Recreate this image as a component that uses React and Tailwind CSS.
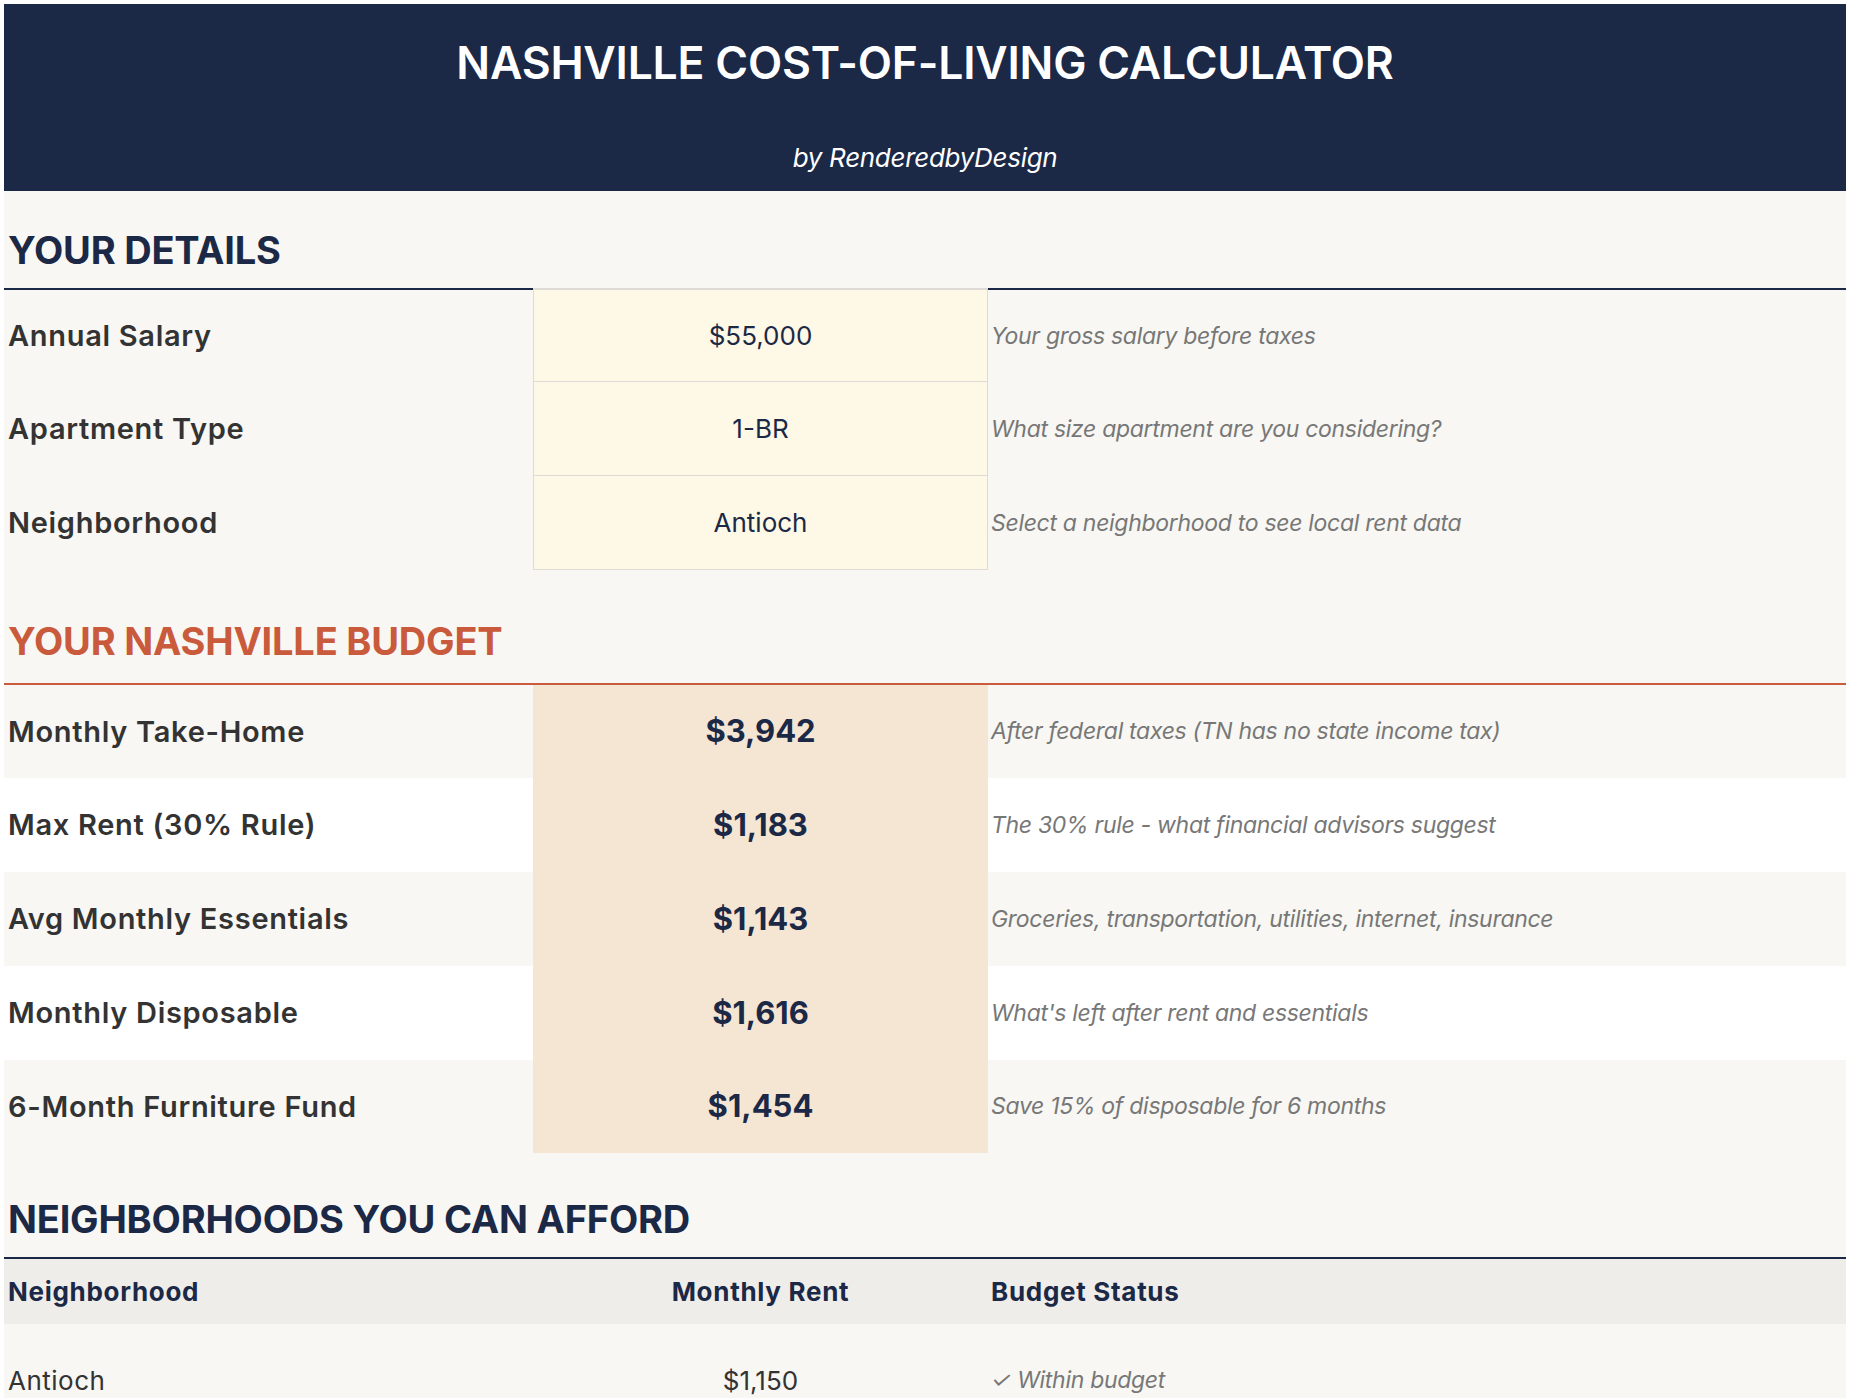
const details = [
  { label: "Annual Salary", value: "$55,000", note: "Your gross salary before taxes" },
  { label: "Apartment Type", value: "1-BR", note: "What size apartment are you considering?" },
  { label: "Neighborhood", value: "Antioch", note: "Select a neighborhood to see local rent data" },
];

const budget = [
  { label: "Monthly Take-Home", value: "$3,942", note: "After federal taxes (TN has no state income tax)", h: "h-[93px]", bg: "bg-[#f8f7f3]" },
  { label: "Max Rent (30% Rule)", value: "$1,183", note: "The 30% rule - what financial advisors suggest", h: "h-[94px]", bg: "bg-white" },
  { label: "Avg Monthly Essentials", value: "$1,143", note: "Groceries, transportation, utilities, internet, insurance", h: "h-[94px]", bg: "bg-[#f8f7f3]" },
  { label: "Monthly Disposable", value: "$1,616", note: "What's left after rent and essentials", h: "h-[94px]", bg: "bg-white" },
  { label: "6-Month Furniture Fund", value: "$1,454", note: "Save 15% of disposable for 6 months", h: "h-[93px]", bg: "bg-[#f8f7f3]" },
];

const cols = "grid grid-cols-[529px_455px_1fr]";
const labelCls = "flex items-center pl-1 text-[29px] font-semibold text-[#333] tracking-[0.7px]";
const noteCls = "flex items-center pl-[3px] text-[23px] italic text-[#777] tracking-[-0.3px]";
const headCls = "pl-1 flex items-center text-[38px] font-bold tracking-[-0.2px]";

export default function App() {
  return (
    <div className="bg-white p-1 font-['Inter','Liberation_Sans',sans-serif]">
      <div className="bg-[#f8f7f3]">
        {/* header */}
        <div className="h-[187px] bg-[#1b2846] text-white flex flex-col items-center">
          <div className="h-[118px] flex items-center text-[44.5px] font-semibold tracking-[-0.2px]">
            NASHVILLE COST-OF-LIVING CALCULATOR
          </div>
          <div className="mt-[21px] leading-[30px] text-[26px] italic tracking-[-0.3px]">by RenderedbyDesign</div>
        </div>

        {/* your details */}
        <div className={headCls + " h-[97px] pt-[21px] text-[#1b2846]"}>YOUR DETAILS</div>
        {details.map((d, i) => (
          <div key={d.label} className={cols + " h-[94px]"}>
            <div className={labelCls + (i === 0 ? " border-t-2 border-[#1b2846]" : "")}>{d.label}</div>
            <div className={"flex items-center justify-center bg-[#fef8e7] border-x border-b border-[#dedbd6] text-[26px] text-[#1b2846] " + (i === 0 ? "border-t-2" : "")}>
              {d.value}
            </div>
            <div className={noteCls + (i === 0 ? " border-t-2 border-[#1b2846]" : "")}>{d.note}</div>
          </div>
        ))}

        {/* budget */}
        <div className={headCls + " h-[115px] pt-[29px] border-b-2 border-[#c95a3b] text-[#c95a3b]"}>
          YOUR NASHVILLE BUDGET
        </div>
        {budget.map((b) => (
          <div key={b.label} className={cols + " " + b.h + " " + b.bg}>
            <div className={labelCls}>{b.label}</div>
            <div className="flex items-center justify-center bg-[#f5e5d3] text-[31px] font-bold text-[#1b2846]">
              {b.value}
            </div>
            <div className={noteCls}>{b.note}</div>
          </div>
        ))}

        {/* neighborhoods */}
        <div className={headCls + " h-[106px] pt-[28px] border-b-2 border-[#1b2846] text-[#1b2846]"}>
          NEIGHBORHOODS YOU CAN AFFORD
        </div>
        <div className={cols + " h-[65px] bg-[#efedea] text-[26px] font-bold text-[#1b2846] tracking-[0.7px]"}>
          <div className="flex items-center pl-1">Neighborhood</div>
          <div className="flex items-center justify-center">Monthly Rent</div>
          <div className="flex items-center pl-[3px]">Budget Status</div>
        </div>
        <div className={cols + " h-[112px] text-[26px] text-[#333]"}>
          <div className="flex items-center pl-1 tracking-[0.5px]">Antioch</div>
          <div className="flex items-center justify-center">$1,150</div>
          <div className={noteCls}>✓ Within budget</div>
        </div>
      </div>
    </div>
  );
}
